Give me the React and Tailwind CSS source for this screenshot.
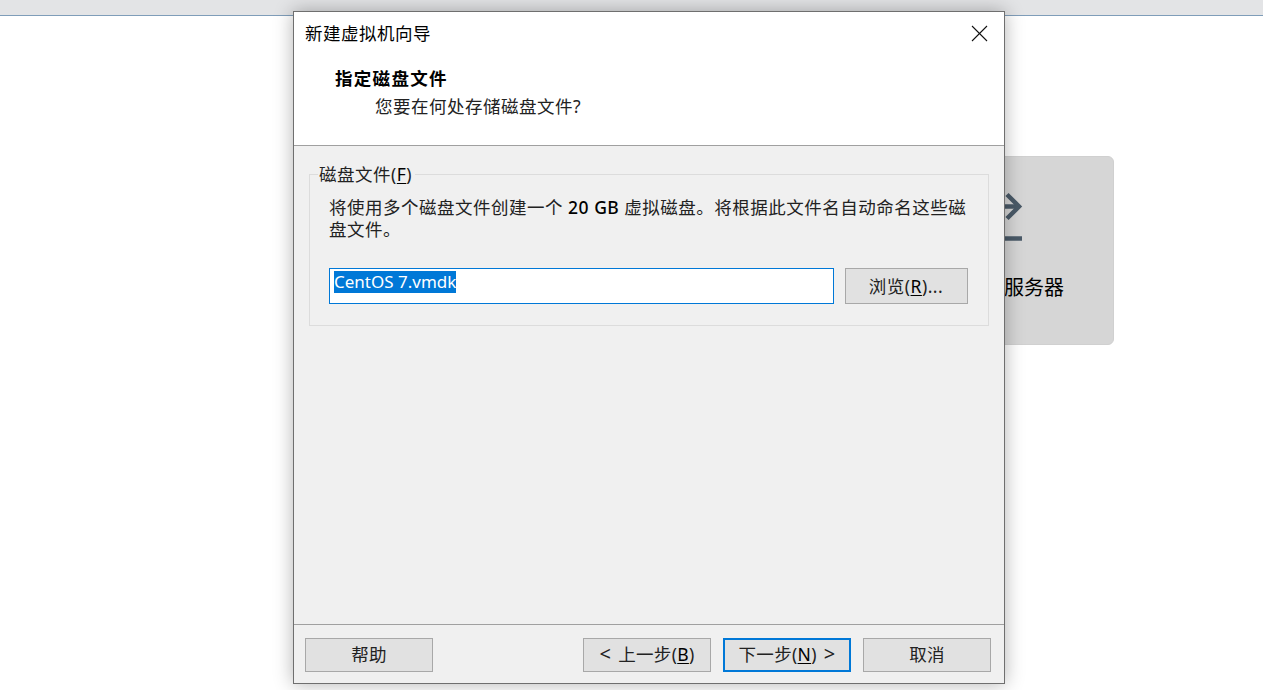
const font = { fontFamily: '"Noto Sans", "Noto Sans CJK SC", sans-serif' };

function Key({ children }) {
  return <span className="text-black underline underline-offset-2">{children}</span>;
}

function WizardButton({ children, className = "border border-[#a8a8a8]" }) {
  return (
    <button
      className={
        "h-[34px] w-[128px] flex items-center justify-center bg-[#e1e1e1] pb-[2px] text-[17.5px] tracking-[0.3px] text-[#222] " +
        className
      }
    >
      <span>{children}</span>
    </button>
  );
}

export default function App() {
  return (
    <div
      className="relative h-[690px] w-[1263px] overflow-hidden bg-white"
      style={font}
    >
      <div className="h-[16px] border-b border-[#7f9db9] bg-[#e3e4e6]" />

      {/* card behind the dialog */}
      <div className="absolute left-[960px] top-[156px] h-[189px] w-[154px] rounded-md border border-[#d0d0d0] bg-[#d6d6d6]">
        <svg
          className="absolute left-[30px] top-[32px]"
          width="36"
          height="54"
          viewBox="0 0 36 54"
          fill="none"
          stroke="#4a5a68"
          strokeWidth="4.5"
        >
          <path d="M0 17.5H27" />
          <path d="M16 5.5L28 17.5L16 29.5" />
          <path d="M10 49.5H31" />
        </svg>
        <span className="absolute left-[43px] top-[117px] text-[20px] leading-[28px] text-black">
          服务器
        </span>
      </div>

      {/* wizard dialog */}
      <div className="absolute left-[293px] top-[11px] flex h-[673px] w-[712px] flex-col border border-[#6f6f6f] bg-[#f0f0f0] shadow-[0_0_18px_rgba(0,0,0,0.3)]">
        <div className="relative h-[134px] shrink-0 border-b border-[#a0a0a0] bg-white">
          <div className="pl-[11px] pt-[8px] text-[17.5px] leading-[26px] tracking-[0.5px] text-black">
            新建虚拟机向导
          </div>
          <svg
            className="absolute right-[16px] top-[13px]"
            width="17"
            height="17"
            viewBox="0 0 17 17"
            fill="none"
            stroke="#111"
            strokeWidth="1.1"
          >
            <path d="M1 1L16 16" />
            <path d="M16 1L1 16" />
          </svg>
          <div className="pl-[41px] pt-[19px] text-[17.5px] font-bold leading-[26px] tracking-[1.3px] text-black">
            指定磁盘文件
          </div>
          <div className="pl-[81px] pt-[2px] text-[17.5px] leading-[26px] tracking-[0.5px] text-[#222]">
            您要在何处存储磁盘文件?
          </div>
        </div>

        <div className="flex-1 px-[15px] pt-[28px]">
          <div className="relative h-[152px] w-[680px] border border-[#dcdcdc] pl-[19px] pt-[21px]">
            <span className="absolute -top-[12px] left-[8px] bg-[#f0f0f0] pl-[1px] pr-[3px] text-[17.5px] leading-[22px] tracking-[0.5px] text-[#222]">
              磁盘文件(<Key>F</Key>)
            </span>
            <p className="w-[640px] text-[17.5px] leading-[22px] tracking-[0.5px] text-[#222]">
              将使用多个磁盘文件创建一个 <span className="font-medium text-black">20 GB</span> 虚拟磁盘。将根据此文件名自动命名这些磁盘文件。
            </p>
            <div className="mt-[28px] flex items-center gap-[11px]">
              <div className="flex h-[36px] w-[505px] items-start border border-[#0078d7] bg-white pl-[4px] pt-[2px]">
                <span className="bg-[#0078d7] text-[17px] leading-[22px] text-white">
                  CentOS 7.vmdk
                </span>
              </div>
              <button className="flex h-[36px] w-[123px] items-center justify-center border border-[#a8a8a8] bg-[#e1e1e1] pr-[1px] text-[17.5px] tracking-[0.5px] text-[#222]">
                <span>
                  浏览(<Key>R</Key>)...
                </span>
              </button>
            </div>
          </div>
        </div>

        <div className="flex h-[59px] shrink-0 items-start justify-between border-t border-[#a0a0a0] pl-[11px] pr-[13px] pt-[13px]">
          <WizardButton>帮助</WizardButton>
          <div className="flex gap-[12px]">
            <WizardButton>
              <span className="mr-[7px] text-[20px]">&lt;</span>上一步(<Key>B</Key>)
            </WizardButton>
            <WizardButton className="border-2 border-[#0078d7]">
              下一步(<Key>N</Key>)<span className="ml-[7px] text-[20px]">&gt;</span>
            </WizardButton>
            <WizardButton>取消</WizardButton>
          </div>
        </div>
      </div>
    </div>
  );
}
